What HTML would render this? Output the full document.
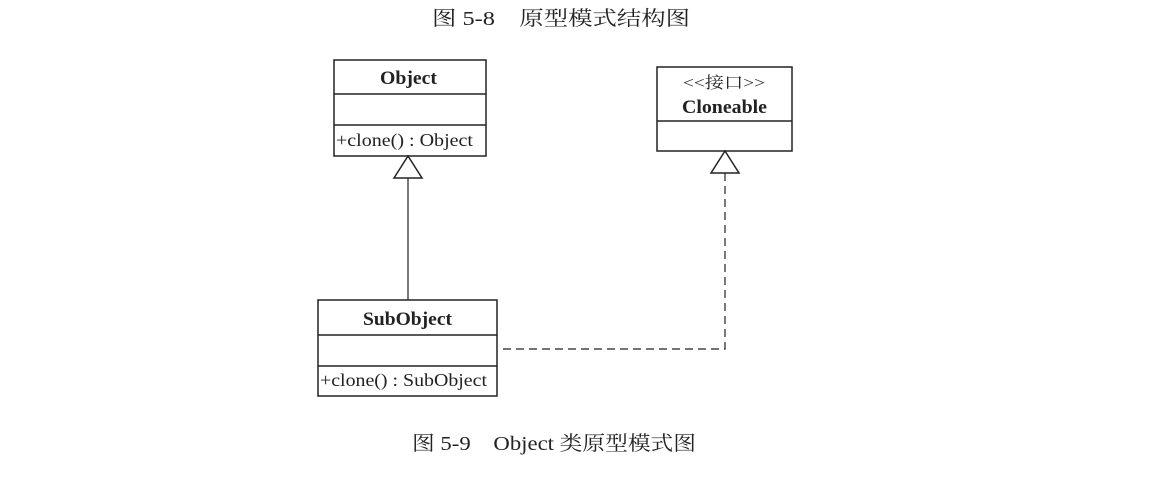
<!DOCTYPE html>
<html><head><meta charset="utf-8"><style>
body{margin:0;background:#fff;width:1174px;height:496px;overflow:hidden}
svg text{font-family:"Liberation Serif","Noto Serif CJK SC",serif;fill:#222}
</style></head><body>
<svg width="1174" height="496" viewBox="0 0 1174 496">
<text x="432" y="25" font-size="20" textLength="258" lengthAdjust="spacingAndGlyphs" xml:space="preserve">图 5-8    原型模式结构图</text>
<g fill="none" stroke="#222" stroke-width="1.5">
<rect x="334" y="60" width="152" height="96"/>
<line x1="334" y1="94" x2="486" y2="94"/>
<line x1="334" y1="125" x2="486" y2="125"/>
<rect x="657" y="67" width="135" height="84"/>
<line x1="657" y1="121" x2="792" y2="121"/>
<rect x="318" y="300" width="179" height="96"/>
<line x1="318" y1="335" x2="497" y2="335"/>
<line x1="318" y1="366" x2="497" y2="366"/>
<polygon points="408,156 394,178 422,178"/>
<line x1="408" y1="178" x2="408" y2="300" stroke-width="1.2"/>
<polygon points="725,151 711,173 739,173"/>
<polyline points="725,173 725,349 498,349" stroke-dasharray="8,5" stroke-width="1.2"/>
</g>
<text x="380" y="84" font-size="19" font-weight="bold" textLength="57" lengthAdjust="spacingAndGlyphs">Object</text>
<text x="336" y="146" font-size="18" textLength="137" lengthAdjust="spacingAndGlyphs">+clone() : Object</text>
<text x="683" y="88" font-size="16" fill="#555" textLength="82" lengthAdjust="spacingAndGlyphs">&lt;&lt;接口&gt;&gt;</text>
<text x="682" y="113" font-size="19" font-weight="bold" textLength="85" lengthAdjust="spacingAndGlyphs">Cloneable</text>
<text x="363" y="325" font-size="19" font-weight="bold" textLength="89" lengthAdjust="spacingAndGlyphs">SubObject</text>
<text x="320" y="386" font-size="18" textLength="167" lengthAdjust="spacingAndGlyphs">+clone() : SubObject</text>
<text x="412" y="450" font-size="20" textLength="284" lengthAdjust="spacingAndGlyphs" xml:space="preserve">图 5-9    Object 类原型模式图</text>
</svg>
</body></html>
